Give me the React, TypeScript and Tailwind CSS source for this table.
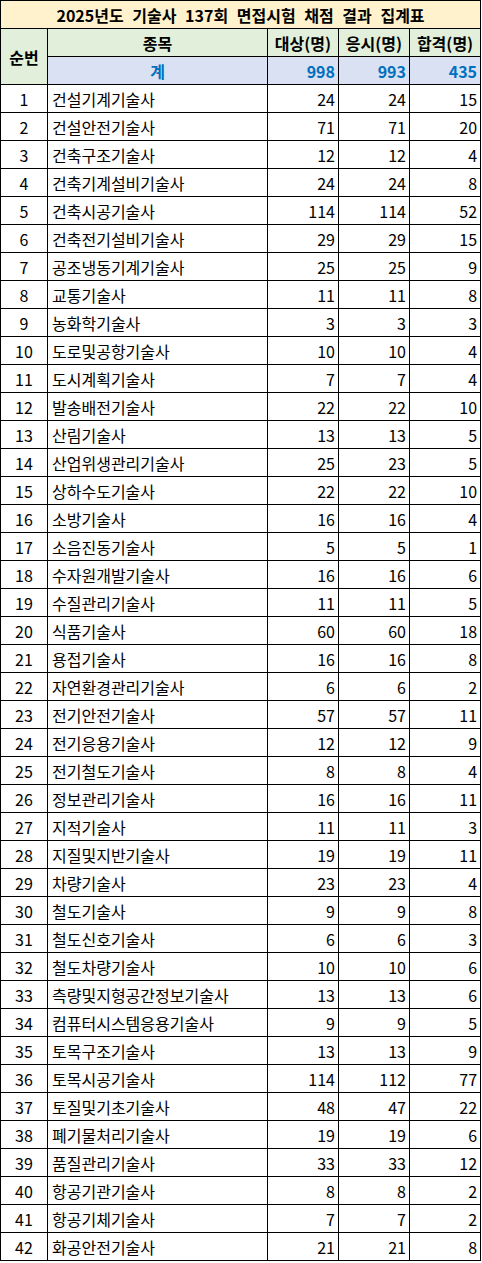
const rows: [string, number, number, number][] = [
  ["건설기계기술사", 24, 24, 15],
  ["건설안전기술사", 71, 71, 20],
  ["건축구조기술사", 12, 12, 4],
  ["건축기계설비기술사", 24, 24, 8],
  ["건축시공기술사", 114, 114, 52],
  ["건축전기설비기술사", 29, 29, 15],
  ["공조냉동기계기술사", 25, 25, 9],
  ["교통기술사", 11, 11, 8],
  ["농화학기술사", 3, 3, 3],
  ["도로및공항기술사", 10, 10, 4],
  ["도시계획기술사", 7, 7, 4],
  ["발송배전기술사", 22, 22, 10],
  ["산림기술사", 13, 13, 5],
  ["산업위생관리기술사", 25, 23, 5],
  ["상하수도기술사", 22, 22, 10],
  ["소방기술사", 16, 16, 4],
  ["소음진동기술사", 5, 5, 1],
  ["수자원개발기술사", 16, 16, 6],
  ["수질관리기술사", 11, 11, 5],
  ["식품기술사", 60, 60, 18],
  ["용접기술사", 16, 16, 8],
  ["자연환경관리기술사", 6, 6, 2],
  ["전기안전기술사", 57, 57, 11],
  ["전기응용기술사", 12, 12, 9],
  ["전기철도기술사", 8, 8, 4],
  ["정보관리기술사", 16, 16, 11],
  ["지적기술사", 11, 11, 3],
  ["지질및지반기술사", 19, 19, 11],
  ["차량기술사", 23, 23, 4],
  ["철도기술사", 9, 9, 8],
  ["철도신호기술사", 6, 6, 3],
  ["철도차량기술사", 10, 10, 6],
  ["측량및지형공간정보기술사", 13, 13, 6],
  ["컴퓨터시스템응용기술사", 9, 9, 5],
  ["토목구조기술사", 13, 13, 9],
  ["토목시공기술사", 114, 112, 77],
  ["토질및기초기술사", 48, 47, 22],
  ["폐기물처리기술사", 19, 19, 6],
  ["품질관리기술사", 33, 33, 12],
  ["항공기관기술사", 8, 8, 2],
  ["항공기체기술사", 7, 7, 2],
  ["화공안전기술사", 21, 21, 8],
];

const cell = "border border-black p-0 h-[28px] leading-none";

export default function App() {
  return (
    <div className="bg-white" style={{ fontFamily: '"Noto Sans CJK KR", "Noto Sans", sans-serif' }}>
      <table className="border-collapse table-fixed w-[481px] text-[16px] text-black">
        <colgroup>
          <col className="w-[47px]" />
          <col className="w-[220px]" />
          <col className="w-[71px]" />
          <col className="w-[71px]" />
          <col className="w-[71px]" />
        </colgroup>
        <thead>
          <tr>
            <th colSpan={5} className={`${cell} bg-[#fff2cc] font-bold [word-spacing:5px]`}>
              2025년도 기술사 137회 면접시험 채점 결과 집계표
            </th>
          </tr>
          <tr>
            <th rowSpan={2} className={`${cell} bg-[#e2efda] font-bold`}>순번</th>
            <th className={`${cell} bg-[#e2efda] font-bold`}>종목</th>
            <th className={`${cell} bg-[#e2efda] font-bold`}>대상(명)</th>
            <th className={`${cell} bg-[#e2efda] font-bold`}>응시(명)</th>
            <th className={`${cell} bg-[#e2efda] font-bold`}>합격(명)</th>
          </tr>
          <tr className="text-[#0070c0] font-bold bg-[#d9e1f2]">
            <td className={`${cell} text-center`}>계</td>
            <td className={`${cell} text-right pr-[3px]`}>998</td>
            <td className={`${cell} text-right pr-[3px]`}>993</td>
            <td className={`${cell} text-right pr-[3px]`}>435</td>
          </tr>
        </thead>
        <tbody>
          {rows.map(([name, a, b, c], i) => (
            <tr key={name}>
              <td className={`${cell} text-center`}>{i + 1}</td>
              <td className={`${cell} text-left pl-[4px]`}>{name}</td>
              <td className={`${cell} text-right pr-[3px]`}>{a}</td>
              <td className={`${cell} text-right pr-[3px]`}>{b}</td>
              <td className={`${cell} text-right pr-[3px]`}>{c}</td>
            </tr>
          ))}
        </tbody>
      </table>
    </div>
  );
}
